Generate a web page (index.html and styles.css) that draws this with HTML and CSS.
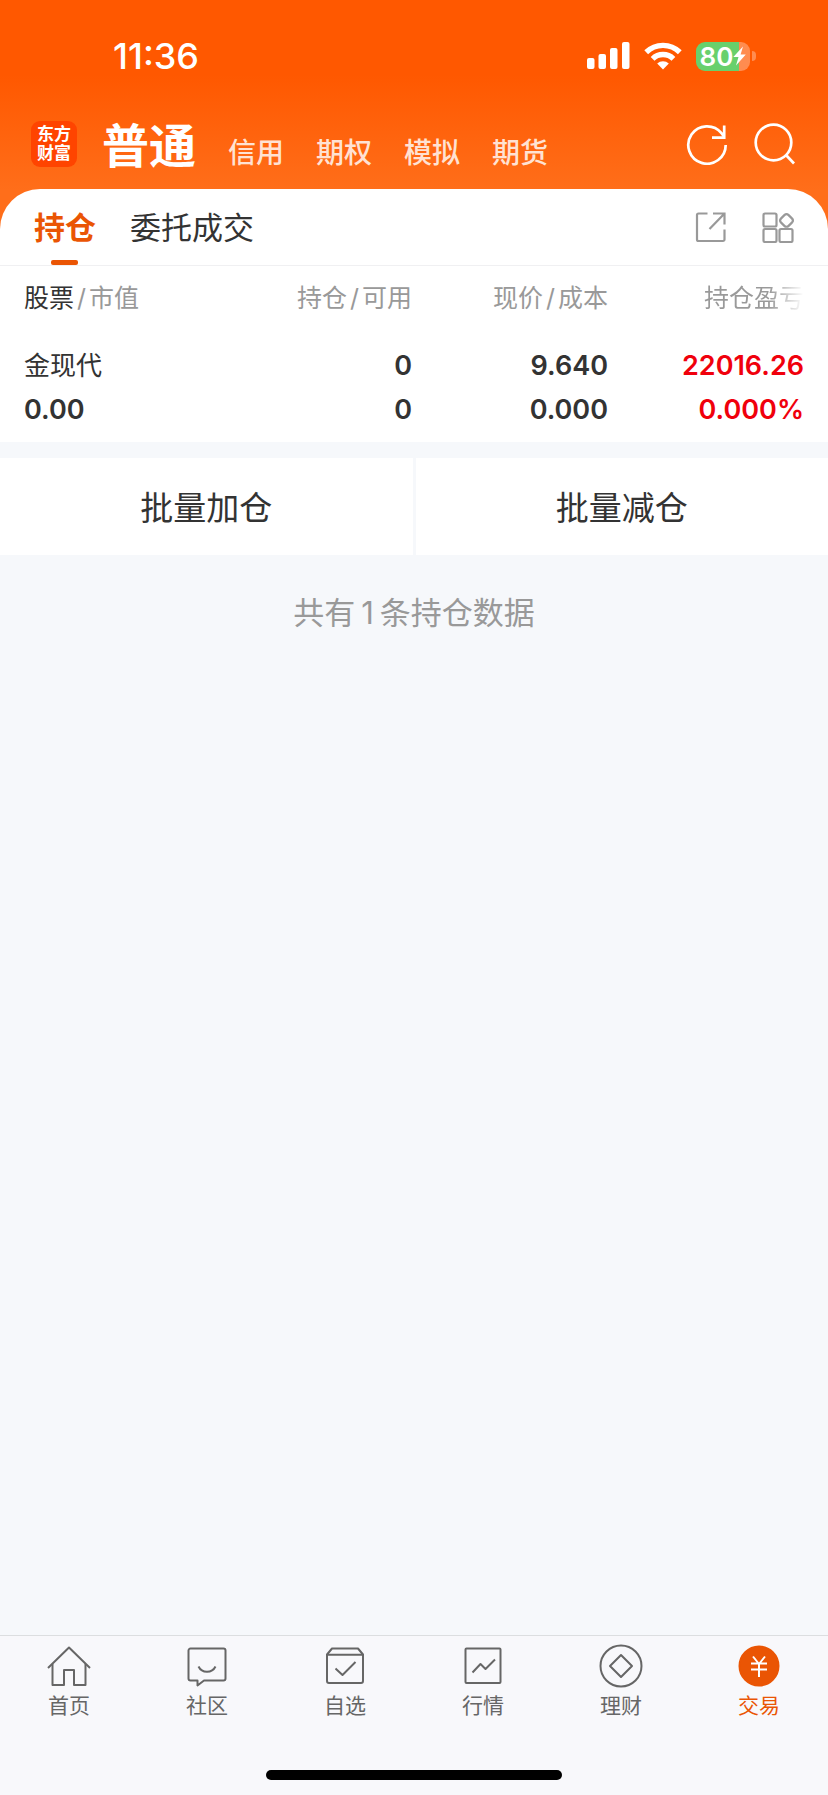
FILE: index.html
```
<!DOCTYPE html>
<html lang="zh-CN">
<head>
    <meta charset="UTF-8">
    <meta name="viewport" content="width=device-width, initial-scale=1.0">
    <title>交易 - 持仓</title>
    <link rel="stylesheet" href="styles.css">
</head>
<body>
    <header class="top">
        <div class="status-bar">
            <span class="time">11:36</span>
            <div class="status-icons">
                <svg width="43" height="28" viewBox="0 0 43 28" fill="#fff">
                    <rect x="0" y="16" width="7.500" height="11" rx="2"/>
                    <rect x="11.500" y="12" width="7.500" height="15" rx="2"/>
                    <rect x="23" y="6" width="7.500" height="21" rx="2"/>
                    <rect x="35" y="0" width="7.500" height="27" rx="2"/>
                </svg>
                <svg width="38" height="28" viewBox="0 0 38 28" fill="none" stroke="#fff" stroke-width="5.4">
                    <path d="M2.2 10.2a24 24 0 0 1 33.6 0"/>
                    <path d="M8.6 16.8a14.8 14.8 0 0 1 20.8 0"/>
                    <path d="M19 27.6l-5.8-6a8.2 8.2 0 0 1 11.6 0z" fill="#fff" stroke="none"/>
                </svg>
                <div class="battery">
                    <span class="battery-body">
                        80
                        <svg width="13" height="20" viewBox="0 0 13 20" fill="#fff"><path d="M10 0.5L0.3 11h5.2L3 19.5 12.8 8.6H7.6z"/></svg>
                    </span>
                    <span class="battery-tip"></span>
                </div>
            </div>
        </div>

        <div class="account-bar">
            <a href="#" class="logo">东方<br>财富</a>
            <nav class="accounts">
                <a href="#" class="active">普通</a>
                <a href="#">信用</a>
                <a href="#">期权</a>
                <a href="#">模拟</a>
                <a href="#">期货</a>
            </nav>
            <div class="actions">
                <button type="button" aria-label="刷新">
                    <svg width="42" height="42" viewBox="0 0 42 42" fill="none" stroke="#fff" stroke-width="2.700">
                        <path d="M39.7 22A18.7 18.7 0 1 1 35.500 10.200L38 13.500"/>
                        <path d="M38.200 2.500v12.200H26"/>
                    </svg>
                </button>
                <button type="button" aria-label="搜索">
                    <svg width="42" height="42" viewBox="0 0 42 42" fill="none" stroke="#fff" stroke-width="2.700">
                        <circle cx="19.5" cy="19.5" r="17.8"/>
                        <path d="M32 32l8 8.5"/>
                    </svg>
                </button>
            </div>
        </div>

        <div class="tabs">
            <button type="button" class="tab active">持仓</button>
            <button type="button" class="tab">委托成交</button>
            <div class="tools">
                <button type="button" aria-label="分享">
                    <svg width="32" height="32" viewBox="0 0 32 32" fill="none" stroke="#999" stroke-width="2.200">
                        <path d="M12.500 2.500H3.500a1.500 1.500 0 0 0-1.500 1.500v24.500a1.500 1.500 0 0 0 1.500 1.500h24.500a1.500 1.500 0 0 0 1.500-1.500V18.500"/>
                        <path d="M18 2.500h11.500v11M29.500 2.500L14.500 18"/>
                    </svg>
                </button>
                <button type="button" aria-label="更多">
                    <svg width="32" height="32" viewBox="0 0 32 32" fill="none" stroke="#999" stroke-width="2.200">
                        <rect x="1.500" y="2.500" width="13" height="13" rx="1.500"/>
                        <rect x="1.500" y="18" width="13" height="13" rx="1.500"/>
                        <rect x="17.500" y="18" width="13" height="13" rx="1.500"/>
                        <rect x="19.200" y="4.200" width="10.600" height="10.600" rx="3" transform="rotate(45 24.500 9.500)"/>
                    </svg>
                </button>
            </div>
        </div>
    </header>

    <main>
        <div class="positions">
            <table>
                <thead>
                    <tr>
                        <th><b>股票</b><i>/</i>市值</th>
                        <th>持仓<i>/</i>可用</th>
                        <th>现价<i>/</i>成本</th>
                        <th><span class="fade">持仓盈亏</span></th>
                    </tr>
                </thead>
                <tbody>
                    <tr>
                        <td class="name">金现代</td>
                        <td>0</td>
                        <td>9.640</td>
                        <td class="up">22016.26</td>
                    </tr>
                    <tr>
                        <td>0.00</td>
                        <td>0</td>
                        <td>0.000</td>
                        <td class="up">0.000%</td>
                    </tr>
                </tbody>
            </table>
        </div>

        <div class="batch">
            <button type="button">批量加仓</button>
            <button type="button">批量减仓</button>
        </div>

        <p class="count">共有<span>1</span>条持仓数据</p>
    </main>

    <footer class="bottom">
        <nav class="menu">
            <a href="#">
                <svg width="44" height="44" viewBox="0 0 44 44">
                    <path d="M1 24L22 3.500 43 24"/>
                    <path d="M5.500 20v21H17V26h10v15h11.500V20"/>
                </svg>
                首页
            </a>
            <a href="#">
                <svg width="44" height="44" viewBox="0 0 44 44">
                    <path d="M5.500 4.500h33a2 2 0 0 1 2 2v28a2 2 0 0 1-2 2H19l-6.500 5v-5h-7a2 2 0 0 1-2-2v-28a2 2 0 0 1 2-2z"/>
                    <path d="M13.500 22.500c3.500 7 13.500 7 17 0"/>
                </svg>
                社区
            </a>
            <a href="#">
                <svg width="44" height="44" viewBox="0 0 44 44">
                    <path d="M4 10.500v26.500a2 2 0 0 0 2 2h32a2 2 0 0 0 2-2V10.500l-5-6H9z"/>
                    <path d="M4 10.800h36M12.500 24.500l7 6.500 13-13"/>
                </svg>
                自选
            </a>
            <a href="#">
                <svg width="44" height="44" viewBox="0 0 44 44">
                    <rect x="4.500" y="4.500" width="35" height="34.500" rx="1"/>
                    <path d="M11.500 28.500l8-8.500 5 5 9.500-9.500"/>
                </svg>
                行情
            </a>
            <a href="#">
                <svg width="44" height="44" viewBox="0 0 44 44">
                    <circle cx="22" cy="22" r="20.500"/>
                    <path d="M22 11l11 11-11 11-11-11z"/>
                </svg>
                理财
            </a>
            <a href="#" class="active">
                <svg width="44" height="44" viewBox="0 0 44 44">
                    <circle cx="22" cy="22" r="19.500" class="fill"/>
                    <path d="M16 12.500l6 7.500 6-7.500M22 20v13M14 19.500h16M14 25.500h16" class="yen"/>
                </svg>
                交易
            </a>
        </nav>
        <div class="home-bar"></div>
    </footer>
</body>
</html>
```
FILE: styles.css
```
* {
    box-sizing: border-box;
}

body {
    margin: 0;
    min-height: 100vh;
    display: flex;
    flex-direction: column;
    font-family: Inter, "Noto Sans CJK SC", sans-serif;
    color: #333;
    background-color: #f6f8fb;
}

a {
    color: inherit;
    text-decoration: none;
}

button {
    padding: 0;
    border: 0;
    background: none;
    font: inherit;
    color: inherit;
}

svg {
    display: block;
    flex: none;
}

/* header */
.top {
    background: linear-gradient(#ff5800 0, #ff5800 75px, #ff6e1a 190px);
}

.status-bar {
    height: 112px;
    padding: 0 72px 0 113px;
    display: flex;
    align-items: center;
    justify-content: space-between;
    color: #fff;
}

.time {
    font-size: 36px;
    font-weight: 500;
}

.status-icons {
    display: flex;
    align-items: center;
    gap: 14px;
}

.battery {
    display: flex;
    align-items: center;
    gap: 2px;
}

.battery-body {
    display: flex;
    align-items: center;
    justify-content: center;
    width: 54px;
    height: 29px;
    border-radius: 9px;
    background: linear-gradient(90deg, #68d06c 80%, #ff8c50 80%);
    font-size: 26px;
    font-weight: 600;
    line-height: 29px;
}

.battery-tip {
    width: 4px;
    height: 10px;
    border-radius: 0 5px 5px 0;
    background-color: #ff8c50;
}

.account-bar {
    height: 77px;
    padding: 0 32px 13px 31px;
    display: flex;
    align-items: center;
}

.logo {
    width: 46px;
    height: 46px;
    padding-top: 4px;
    border-radius: 9px;
    background-color: #ff4400;
    color: #fff;
    font-size: 17px;
    font-weight: 700;
    line-height: 19px;
    text-align: center;
}

.accounts {
    flex: 1;
    margin-left: 25px;
    padding-top: 4px;
    display: flex;
    align-items: flex-end;
    gap: 32px;
    color: #ffe2d3;
    font-size: 28px;
    font-weight: 500;
    line-height: 50px;
}

.accounts .active {
    color: #fff;
    font-size: 47px;
    font-weight: 700;
    line-height: 64px;
}

.actions {
    display: flex;
    gap: 26px;
}

.tabs {
    height: 77px;
    padding: 0 34px;
    display: flex;
    gap: 34px;
    border-bottom: 1px solid #f0f0f2;
    border-radius: 40px 40px 0 0;
    background-color: #fff;
}

.tab {
    position: relative;
    padding-bottom: 4px;
    font-size: 31px;
}

.tab.active {
    color: #ea5504;
    font-weight: 700;
}

.tab.active::after {
    content: "";
    position: absolute;
    left: 50%;
    bottom: 0;
    width: 27px;
    height: 5px;
    margin-left: -14px;
    border-radius: 2px;
    background-color: #ea5504;
}

.tools {
    margin-left: auto;
    display: flex;
    align-items: center;
    gap: 35px;
}

/* positions */
.positions {
    padding: 0 24px 10px;
    background-color: #fff;
}

table {
    width: 100%;
    table-layout: fixed;
    border-collapse: collapse;
}

th, td {
    width: 196px;
    padding: 0;
    text-align: right;
    white-space: nowrap;
}

th:first-child, td:first-child {
    width: auto;
    text-align: left;
}

th {
    height: 78px;
    padding-bottom: 19px;
    color: #999;
    font-size: 25px;
    font-weight: 400;
}

th b {
    color: #333;
    font-weight: 400;
}

th i {
    margin: 0 3px;
    font-style: normal;
}

.fade {
    color: transparent;
    background: linear-gradient(90deg, #999 65%, #fff 100%);
    -webkit-background-clip: text;
    background-clip: text;
}

td {
    height: 44px;
    font-size: 27px;
    font-weight: 600;
    line-height: 44px;
}

td.name {
    font-size: 26px;
    font-weight: 400;
}

td.up {
    color: #f0000c;
}

/* batch buttons */
.batch {
    margin-top: 16px;
    display: flex;
    gap: 3px;
}

.batch button {
    flex: 1;
    height: 97px;
    padding-bottom: 2px;
    background-color: #fff;
    font-size: 33px;
}

.count {
    margin: 35px 0 0;
    color: #999;
    font-size: 31px;
    line-height: 46px;
    text-align: center;
}

.count span {
    margin: 0 6px;
}

/* bottom menu */
.bottom {
    margin-top: auto;
    border-top: 1px solid #dcdee0;
    background-color: #f8f8fb;
}

.menu {
    height: 134px;
    padding-top: 8px;
    display: flex;
}

.menu a {
    flex: 1;
    display: flex;
    flex-direction: column;
    align-items: center;
    gap: 2px;
    color: #666;
    font-size: 21px;
    line-height: 32px;
}

.menu a.active {
    color: #ea5504;
}

.menu svg {
    fill: none;
    stroke: #666;
    stroke-width: 2;
    stroke-linejoin: round;
}

.menu .fill {
    fill: #ea5504;
    stroke: #ea5504;
}

.menu .yen {
    stroke: #fff;
}

.home-bar {
    width: 296px;
    height: 10px;
    margin: 0 auto 15px;
    border-radius: 5px;
    background-color: #000;
}
```
